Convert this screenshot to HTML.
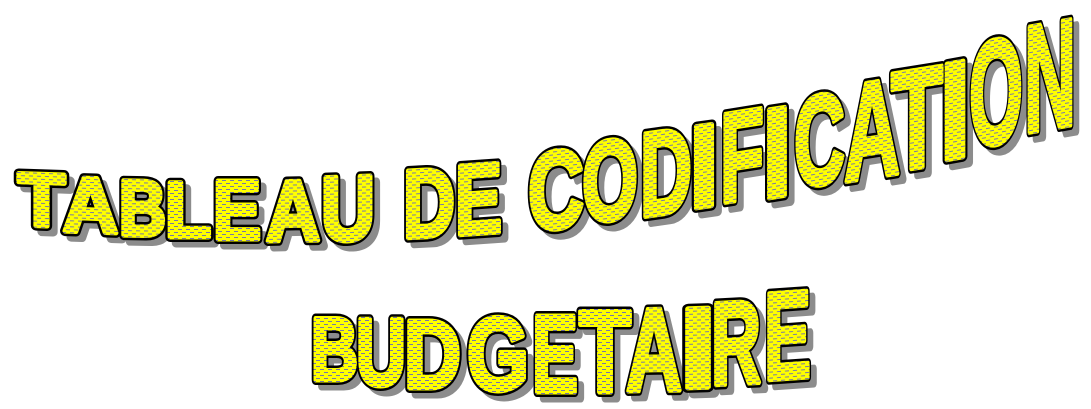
<!DOCTYPE html>
<html><head><meta charset="utf-8"><style>
html,body{margin:0;padding:0;background:#fff;width:1091px;height:409px;overflow:hidden}
svg{display:block}
text{font-family:"Liberation Sans",sans-serif;font-weight:bold}
.s{fill:#8c8c8c;stroke:#8c8c8c;stroke-width:9;stroke-linejoin:round}
.k{fill:#000;stroke:#000;stroke-width:10;stroke-linejoin:round}
.m{fill:url(#p);stroke:url(#p);stroke-width:5;stroke-linejoin:round}
</style></head><body>
<svg width="1091" height="409" viewBox="0 0 1091 409" xmlns="http://www.w3.org/2000/svg" xmlns:xlink="http://www.w3.org/1999/xlink">
<defs>
<pattern id="p" width="8" height="6" patternUnits="userSpaceOnUse">
<rect width="8" height="6" fill="#ffff00"/>
<rect x="0" y="1" width="4" height="1" fill="#7878a8"/>
<rect x="4" y="4" width="4" height="1" fill="#7878a8"/>
</pattern>
<g id="all">
<text transform="translate(17,225) skewY(2)" x="1" font-size="75" textLength="47" lengthAdjust="spacingAndGlyphs">T</text>
<text transform="translate(62,231) skewY(2)" x="1" font-size="78" textLength="55" lengthAdjust="spacingAndGlyphs">A</text>
<text transform="translate(120,235) skewY(1)" x="-1" font-size="79" textLength="47" lengthAdjust="spacingAndGlyphs">B</text>
<text transform="translate(166,237)" x="-1" font-size="79" textLength="46" lengthAdjust="spacingAndGlyphs">L</text>
<text transform="translate(214,239)" x="-1" font-size="84" textLength="48" lengthAdjust="spacingAndGlyphs">E</text>
<text transform="translate(265,241) skewY(-1)" x="1" font-size="86" textLength="54" lengthAdjust="spacingAndGlyphs">A</text>
<text transform="translate(322,241) skewY(-2)" x="-1" font-size="92" textLength="54" lengthAdjust="spacingAndGlyphs">U</text>
<text transform="translate(404,238) skewY(-3)" x="-1" font-size="97" textLength="52" lengthAdjust="spacingAndGlyphs">D</text>
<text transform="translate(456,235) skewY(-4)" x="-1" font-size="100" textLength="47" lengthAdjust="spacingAndGlyphs">E</text>
<text transform="translate(529,231) skewY(-6)" x="-1" font-size="111" textLength="56" lengthAdjust="spacingAndGlyphs">C</text>
<text transform="translate(583,223) skewY(-7)" x="-1" font-size="114" textLength="56" lengthAdjust="spacingAndGlyphs">O</text>
<text transform="translate(641,217) skewY(-8)" x="-1" font-size="120" textLength="52" lengthAdjust="spacingAndGlyphs">D</text>
<text transform="translate(695,208) skewY(-8)" x="-6" font-size="118" textLength="30" lengthAdjust="spacingAndGlyphs">I</text>
<text transform="translate(721,203) skewY(-9)" x="-1" font-size="128" textLength="44" lengthAdjust="spacingAndGlyphs">F</text>
<text transform="translate(768,198) skewY(-9)" x="-6" font-size="128" textLength="30" lengthAdjust="spacingAndGlyphs">I</text>
<text transform="translate(795,188) skewY(-9)" x="-1" font-size="128" textLength="51" lengthAdjust="spacingAndGlyphs">C</text>
<text transform="translate(843,182) skewY(-9)" x="1" font-size="138" textLength="56" lengthAdjust="spacingAndGlyphs">A</text>
<text transform="translate(890,172) skewY(-9)" x="1" font-size="142" textLength="52" lengthAdjust="spacingAndGlyphs">T</text>
<text transform="translate(945,160) skewY(-10)" x="-6" font-size="139" textLength="32" lengthAdjust="spacingAndGlyphs">I</text>
<text transform="translate(970,148) skewY(-10)" x="-1" font-size="149" textLength="54" lengthAdjust="spacingAndGlyphs">O</text>
<text transform="translate(1025,133) skewY(-10)" x="-1" font-size="153" textLength="52" lengthAdjust="spacingAndGlyphs">N</text>

<text transform="translate(312,380)" x="-1" font-size="89" textLength="47" lengthAdjust="spacingAndGlyphs">B</text>
<text transform="translate(357,385)" x="-1" font-size="96" textLength="50" lengthAdjust="spacingAndGlyphs">U</text>
<text transform="translate(405,388)" x="-1" font-size="97" textLength="57" lengthAdjust="spacingAndGlyphs">D</text>
<text transform="translate(468,390)" x="-1" font-size="104" textLength="62" lengthAdjust="spacingAndGlyphs">G</text>
<text transform="translate(533,392)" x="-1" font-size="110" textLength="46" lengthAdjust="spacingAndGlyphs">E</text>
<text transform="translate(578,392)" x="1" font-size="117" textLength="52" lengthAdjust="spacingAndGlyphs">T</text>
<text transform="translate(625,391) skewY(-1)" x="1" font-size="118" textLength="56" lengthAdjust="spacingAndGlyphs">A</text>
<text transform="translate(685,388) skewY(-2)" x="-6" font-size="115" textLength="38" lengthAdjust="spacingAndGlyphs">I</text>
<text transform="translate(712,385) skewY(-3)" x="-1" font-size="118" textLength="50" lengthAdjust="spacingAndGlyphs">R</text>
<text transform="translate(765,380) skewY(-4)" x="-1" font-size="125" textLength="47" lengthAdjust="spacingAndGlyphs">E</text>
</g>
</defs>
<use xlink:href="#all" href="#all" class="s" x="6" y="6"/>
<use xlink:href="#all" href="#all" class="k"/>
<use xlink:href="#all" href="#all" class="m"/>
</svg>
</body></html>
